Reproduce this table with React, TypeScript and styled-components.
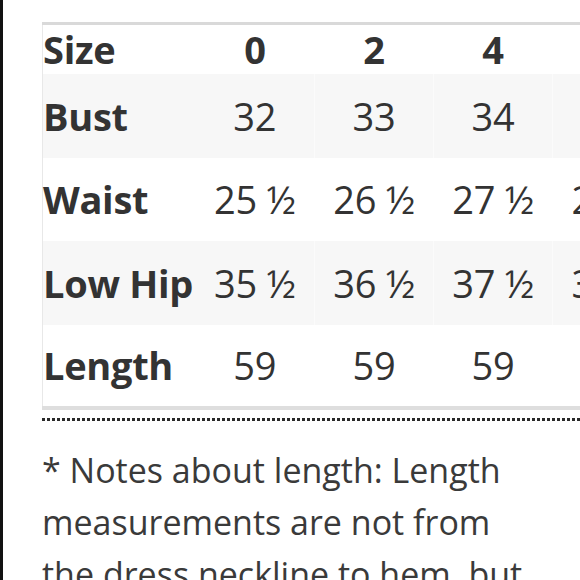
import React from 'react';
import styled, { createGlobalStyle } from 'styled-components';

const GlobalStyle = createGlobalStyle`
  html, body {
    margin: 0;
    padding: 0;
    background: #ffffff;
    overflow: hidden;
  }
  body {
    font-family: 'Open Sans', 'Liberation Sans', sans-serif;
    color: #333333;
  }
`;

const Page = styled.div`
  box-sizing: border-box;
  width: 580px;
  height: 580px;
  overflow: hidden;
  border-left: 3px solid #111111;
  padding: 22px 0 0 39px;
`;

const TableWrap = styled.div`
  width: 700px;
`;

const Table = styled.table`
  border-collapse: collapse;
  table-layout: fixed;
  width: 629px;
  border-top: 3px solid #d9d9d9;
  border-bottom: 4px solid #dedede;
  border-left: 1px solid #e8e8e8;

  col.label {
    width: 153px;
  }

  col.size {
    width: 119px;
  }

  th,
  td {
    padding: 0;
    line-height: 46px;
    font-size: 38px;
    white-space: nowrap;
    color: #333333;
  }
`;

const Row = styled.tr<{ $shaded?: boolean; $head?: boolean }>`
  height: ${(p) => (p.$head ? '50px' : p.$shaded ? '84px' : '83px')};
  background: ${(p) => (p.$shaded ? '#f7f7f7' : '#ffffff')};

  td + td,
  th + th {
    border-left: 1px solid ${(p) => (p.$shaded ? '#fbfbfb' : '#ffffff')};
  }
`;

const Label = styled.th`
  text-align: left;
  font-weight: 700;
  letter-spacing: -0.3px;
`;

const HeadCell = styled.th`
  text-align: center;
  font-weight: 700;
`;

const Cell = styled.td`
  text-align: center;
  font-weight: 400;
  letter-spacing: -0.2px;
`;

const Dots = styled.div`
  margin-top: 8px;
  height: 3px;
  width: 540px;
  background: repeating-linear-gradient(to right, #2a2a2a 0 3px, transparent 3px 5px);
`;

const Note = styled.p`
  margin: 23px 0 0;
  width: 490px;
  font-size: 34px;
  line-height: 52px;
  color: #3a3a3a;
`;

const sizes = ['0', '2', '4', '6'];

const rows = [
  { label: 'Bust', values: ['32', '33', '34', '35'] },
  { label: 'Waist', values: ['25 ½', '26 ½', '27 ½', '28 ½'] },
  { label: 'Low Hip', values: ['35 ½', '36 ½', '37 ½', '38 ½'] },
  { label: 'Length', values: ['59', '59', '59', '59'] },
];

const App: React.FC = () => {
  return (
    <>
      <GlobalStyle />
      <Page>
        <TableWrap>
          <Table>
            <colgroup>
              <col className="label" />
              {sizes.map((s) => (
                <col className="size" key={s} />
              ))}
            </colgroup>
            <thead>
              <Row $head>
                <Label>Size</Label>
                {sizes.map((s) => (
                  <HeadCell key={s}>{s}</HeadCell>
                ))}
              </Row>
            </thead>
            <tbody>
              {rows.map((r, i) => (
                <Row key={r.label} $shaded={i % 2 === 0}>
                  <Label>{r.label}</Label>
                  {r.values.map((v, j) => (
                    <Cell key={j}>{v}</Cell>
                  ))}
                </Row>
              ))}
            </tbody>
          </Table>
          <Dots />
        </TableWrap>
        <Note>
          * Notes about length: Length measurements are not from the dress neckline to hem, but
          from the highest point of the shoulder.
        </Note>
      </Page>
    </>
  );
};

export default App;
